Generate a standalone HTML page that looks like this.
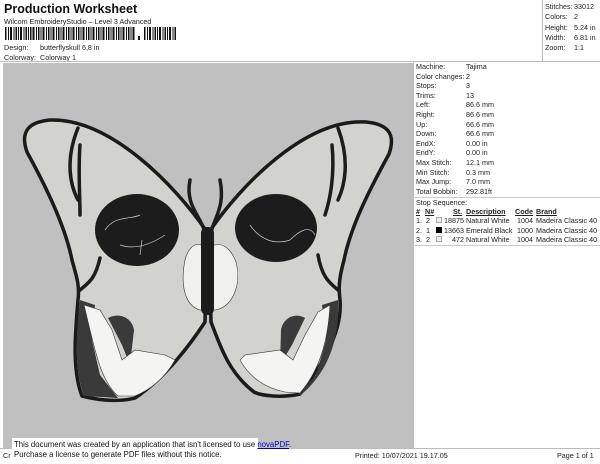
<!DOCTYPE html>
<html><head><meta charset="utf-8"><style>
*{margin:0;padding:0;box-sizing:border-box}
body{width:600px;height:464px;background:#fff;font-family:"Liberation Sans",Arial,sans-serif;color:#222;position:relative;overflow:hidden;font-size:7.2px}
.a{position:absolute;white-space:nowrap}
</style></head><body>
<div class="a" style="left:4px;top:2px;font-size:12.5px;font-weight:bold;color:#111">Production Worksheet</div>
<div class="a" style="left:4px;top:17px;font-size:7.2px">Wilcom EmbroideryStudio – Level 3 Advanced</div>
<svg class="a" style="left:5px;top:27px" width="172" height="14">
<g fill="#111">
<rect x="0" y="0" width="1.5" height="13"/><rect x="3" y="0" width="1" height="13"/><rect x="5" y="0" width="2" height="13"/><rect x="8.5" y="0" width="1" height="13"/><rect x="10.5" y="0" width="1.5" height="13"/><rect x="13" y="0" width="1" height="13"/><rect x="15" y="0" width="2" height="13"/><rect x="18.5" y="0" width="1" height="13"/><rect x="20.5" y="0" width="1.5" height="13"/><rect x="23" y="0" width="1" height="13"/><rect x="25" y="0" width="1.5" height="13"/><rect x="27.5" y="0" width="2" height="13"/><rect x="31" y="0" width="1" height="13"/><rect x="33" y="0" width="1.5" height="13"/><rect x="35.5" y="0" width="1" height="13"/><rect x="37.5" y="0" width="2" height="13"/><rect x="41" y="0" width="1" height="13"/><rect x="43" y="0" width="1.5" height="13"/><rect x="45.5" y="0" width="1" height="13"/><rect x="47.5" y="0" width="2" height="13"/><rect x="51" y="0" width="1" height="13"/><rect x="53" y="0" width="1.5" height="13"/><rect x="55.5" y="0" width="1" height="13"/><rect x="57.5" y="0" width="2" height="13"/><rect x="61" y="0" width="1" height="13"/><rect x="63" y="0" width="1.5" height="13"/><rect x="65.5" y="0" width="1" height="13"/><rect x="67.5" y="0" width="2" height="13"/><rect x="71" y="0" width="1" height="13"/><rect x="73" y="0" width="1.5" height="13"/><rect x="75.5" y="0" width="1" height="13"/><rect x="77.5" y="0" width="2" height="13"/><rect x="81" y="0" width="1" height="13"/><rect x="83" y="0" width="1.5" height="13"/><rect x="85.5" y="0" width="1" height="13"/><rect x="87.5" y="0" width="2" height="13"/><rect x="91" y="0" width="1" height="13"/><rect x="93" y="0" width="1.5" height="13"/><rect x="95.5" y="0" width="1" height="13"/><rect x="97.5" y="0" width="2" height="13"/><rect x="101" y="0" width="1" height="13"/><rect x="103" y="0" width="1.5" height="13"/><rect x="105.5" y="0" width="1" height="13"/><rect x="107.5" y="0" width="2" height="13"/><rect x="111" y="0" width="1" height="13"/><rect x="113" y="0" width="1.5" height="13"/><rect x="115.5" y="0" width="1" height="13"/><rect x="117.5" y="0" width="2" height="13"/><rect x="121" y="0" width="1" height="13"/><rect x="123" y="0" width="1.5" height="13"/><rect x="125.5" y="0" width="1" height="13"/><rect x="127.5" y="0" width="2" height="13"/>
<rect x="133" y="9" width="2" height="4"/>
<rect x="139" y="0" width="1.5" height="13"/><rect x="142" y="0" width="1" height="13"/><rect x="144" y="0" width="2" height="13"/><rect x="147.5" y="0" width="1" height="13"/><rect x="149.5" y="0" width="1.5" height="13"/><rect x="152" y="0" width="1" height="13"/><rect x="154" y="0" width="2" height="13"/><rect x="157.5" y="0" width="1" height="13"/><rect x="159.5" y="0" width="1.5" height="13"/><rect x="162" y="0" width="1" height="13"/><rect x="164" y="0" width="2" height="13"/><rect x="167.5" y="0" width="1" height="13"/><rect x="169.5" y="0" width="1.5" height="13"/>
</g></svg>
<div class="a" style="left:4px;top:43px">Design:</div><div class="a" style="left:40px;top:43px">butterflyskull 6,8 in</div>
<div class="a" style="left:4px;top:53px">Colorway:</div><div class="a" style="left:40px;top:53px">Colorway 1</div>

<div class="a" style="left:0;top:0;width:600px;height:62px;border-bottom:1px solid #bbb"></div>
<div class="a" style="left:542px;top:0;width:1px;height:62px;background:#bbb"></div>
<div class="a" style="left:545px;top:2px;line-height:10.3px">Stitches:<br>Colors:<br>Height:<br>Width:<br>Zoom:</div>
<div class="a" style="left:574px;top:2px;line-height:10.3px;background:#fff">33012<br>2<br>5.24 in<br>6.81 in<br>1:1</div>

<div class="a" style="left:3px;top:63px;width:410px;height:385px;background:#c0c0c0"></div>
<svg class="a" style="left:0;top:0" width="413" height="448">
<g stroke="#1a1a1a" stroke-width="3.5" fill="#d2d3ce" stroke-linejoin="round">
<path d="M207,232 C175,185 110,118 50,120 C28,122 20,132 27,152 C45,185 65,225 72,260 C76,275 80,285 78,300 C75,335 72,370 82,396 C105,402 125,401 135,398 C165,378 190,345 205,322 Z"/>
<path d="M209,232 C241,185 306,118 366,122 C388,124 396,134 389,154 C371,187 351,225 344,260 C340,275 338,285 340,300 C343,335 318,370 300,394 C282,398 262,396 254,392 C228,372 220,345 211,322 Z"/>
</g>
<g fill="#3a3a3a">
<path d="M80,300 L95,305 L92,340 L100,375 L118,398 L84,396 C74,370 76,335 80,300 Z"/>
<path d="M108,318 C120,312 132,318 134,330 L130,365 L122,345 Z"/>
<path d="M338,300 L322,305 L326,340 L316,375 L298,395 L302,394 C330,370 340,335 338,300 Z"/>
<path d="M305,318 C295,312 283,318 281,330 L280,365 L292,345 Z"/>
</g>
<g fill="#f4f4f2" stroke="#333" stroke-width="0.6">
<path d="M84,305 L100,310 L112,330 L122,360 L135,350 L165,355 L175,360 C165,378 150,390 135,396 L118,396 C100,380 95,350 84,305 Z"/>
<path d="M330,305 L318,312 L305,335 L293,360 L280,350 L245,355 L240,360 C250,378 265,388 285,392 L300,393 C320,370 328,340 330,305 Z"/>
<path d="M185,260 C190,240 205,240 207,255 C210,240 228,240 236,262 C242,285 232,308 215,310 L200,310 C185,306 180,285 185,260 Z" fill="#f0f0ee"/>
</g>
<g fill="#1c1c1c">
<ellipse cx="137" cy="230" rx="42" ry="36"/>
<ellipse cx="276" cy="228" rx="41" ry="34"/>
<rect x="201" y="227" width="13" height="88" rx="6"/>
</g>
<g fill="none" stroke="#1c1c1c" stroke-width="3.5" stroke-linecap="round">
<path d="M205,232 C200,215 185,205 190,180"/>
<path d="M211,232 C216,215 225,205 220,180"/>
<path d="M78,128 C65,160 70,185 78,200"/>
<path d="M80,145 C78,170 80,195 80,215"/>
<path d="M338,128 C350,160 345,185 338,200"/>
<path d="M332,145 C335,175 330,200 325,215"/>
<path d="M80,290 C88,283 95,280 100,258"/>
<path d="M338,290 C330,283 322,278 318,255"/>
</g>
<g fill="none" stroke="#ccc" stroke-width="0.7">
<path d="M105,230 C115,215 130,220 140,215 M120,245 C135,250 150,245 165,235 M140,255 L142,240"/>
<path d="M250,225 C260,240 275,245 290,240 M290,240 C300,230 310,225 315,235"/>
</g>
</svg>

<div class="a" style="left:413px;top:62px;width:1px;height:386px;background:#bbb"></div>
<div class="a" style="left:416px;top:62px;line-height:9.6px">Machine:<br>Color changes:<br>Stops:<br>Trims:<br>Left:<br>Right:<br>Up:<br>Down:<br>EndX:<br>EndY:<br>Max Stitch:<br>Min Stitch:<br>Max Jump:<br>Total Bobbin:</div>
<div class="a" style="left:466px;top:62px;line-height:9.6px">Tajima<br>2<br>3<br>13<br>86.6 mm<br>86.6 mm<br>66.6 mm<br>66.6 mm<br>0.00 in<br>0.00 in<br>12.1 mm<br>0.3 mm<br>7.0 mm<br>292.81ft</div>
<div class="a" style="left:413px;top:197px;width:187px;height:1px;background:#ccc"></div>
<div class="a" style="left:416px;top:198px">Stop Sequence:</div>
<div class="a" style="left:416px;top:207px;font-weight:bold;text-decoration:underline">#</div>
<div class="a" style="left:425px;top:207px;font-weight:bold;text-decoration:underline">N#</div>
<div class="a" style="left:453px;top:207px;font-weight:bold;text-decoration:underline">St.</div>
<div class="a" style="left:466px;top:207px;font-weight:bold;text-decoration:underline">Description</div>
<div class="a" style="left:515px;top:207px;font-weight:bold;text-decoration:underline">Code</div>
<div class="a" style="left:536px;top:207px;font-weight:bold;text-decoration:underline">Brand</div>
<div class="a" style="left:416px;top:216px;line-height:9.6px">1.&nbsp; 2<br>2.&nbsp; 1<br>3.&nbsp; 2</div>
<div class="a" style="left:436px;top:217px;width:6px;height:6px;border:1px solid #aaa;background:#eee"></div>
<div class="a" style="left:436px;top:227px;width:6px;height:6px;background:#000"></div>
<div class="a" style="left:436px;top:236px;width:6px;height:6px;border:1px solid #aaa;background:#eee"></div>
<div class="a" style="left:440px;top:216px;line-height:9.6px;width:24px;text-align:right">18875<br>13663<br>472</div>
<div class="a" style="left:466px;top:216px;line-height:9.6px">Natural White<br>Emerald Black<br>Natural White</div>
<div class="a" style="left:517px;top:216px;line-height:9.6px">1004<br>1000<br>1004</div>
<div class="a" style="left:536px;top:216px;line-height:9.6px">Madeira Classic 40<br>Madeira Classic 40<br>Madeira Classic 40</div>
<div class="a" style="left:413px;top:245px;width:187px;height:1px;background:#ccc"></div>

<div class="a" style="left:0;top:448px;width:600px;height:1px;background:#bbb"></div>
<div class="a" style="left:3px;top:451px">Cr</div>
<div class="a" style="left:355px;top:451px">Printed: 10/07/2021 19.17.05</div>
<div class="a" style="left:557px;top:451px">Page 1 of 1</div>
<div class="a" style="left:12px;top:438px;width:246px;height:26px;background:#fff;padding:2px 2px;font-size:7.8px;line-height:10px;color:#111">This document was created by an application that isn't licensed to use <span style="color:#00c;text-decoration:underline">novaPDF</span>.<br>Purchase a license to generate PDF files without this notice.</div>
</body></html>
